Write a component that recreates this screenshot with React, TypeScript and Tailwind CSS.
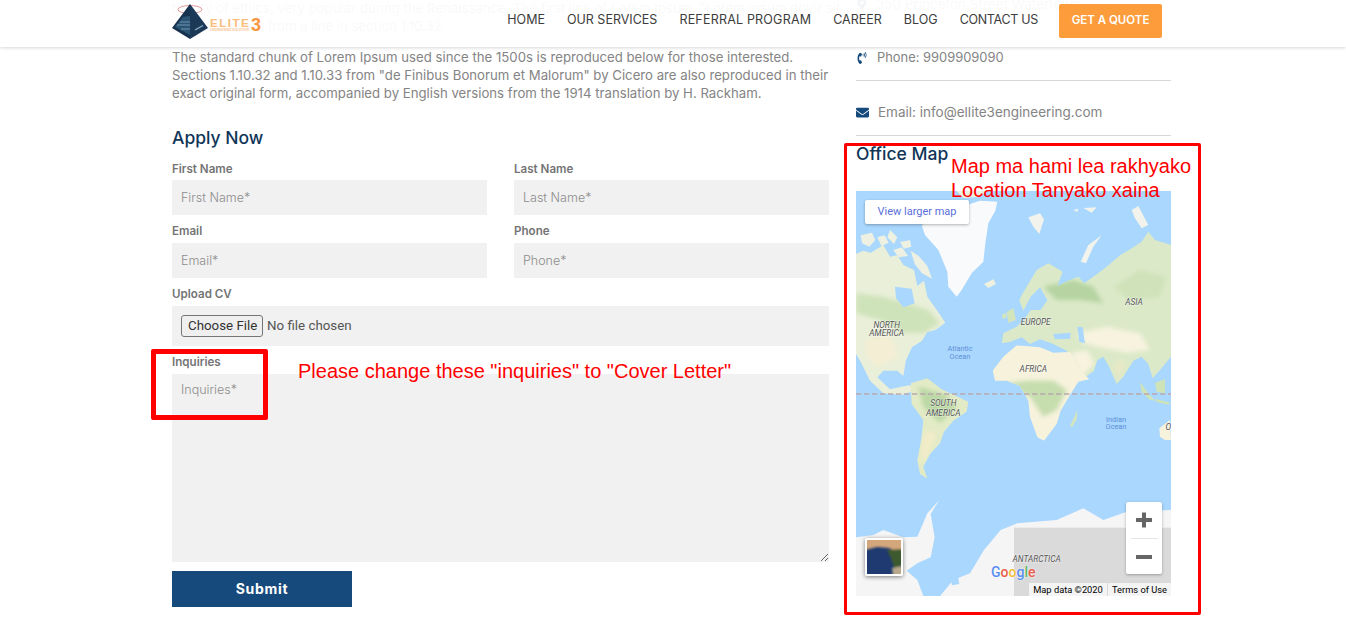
import { FaEnvelope, FaPhoneVolume, FaMapMarkerAlt } from "react-icons/fa";

const inputCls =
  "h-[35px] w-full bg-[#f1f1f1] px-[9px] text-[12.5px] text-[#666] outline-none placeholder:text-[#8d8d8d] placeholder:font-light";
const labelCls = "block h-[12px] text-[11.6px] leading-[12px] font-semibold text-[#747474]";

function Field({ label, ph, gap }: { label: string; ph: string; gap: string }) {
  return (
    <div className={`flex flex-col ${gap}`}>
      <span className={labelCls}>{label}</span>
      <input className={inputCls} placeholder={ph} />
    </div>
  );
}

function Logo() {
  return (
    <div className="mb-[3px] flex items-center">
      <svg width="38" height="38" viewBox="0 0 38 38" className="shrink-0">
        <ellipse cx="18" cy="6.5" rx="12" ry="4" fill="none" stroke="#e08d8d" strokeWidth="0.9" />
        <path d="M18 1 L36 25 L18 36 Z" fill="#1c3a57" />
        <path d="M18 1 L0 25 L18 36 Z" fill="#17324e" />
        <path d="M11 14 L18 13 L18 32 L3 24 Z" fill="#2b5474" />
        <path d="M8 19 H18 M5 22 H18 M9 26 H18" stroke="#8fb0c8" strokeWidth="0.7" />
        <path d="M23 27 L31 22.5" stroke="#8fb0c8" strokeWidth="1.4" />
      </svg>
      <div className="flex h-[38px] items-center">
        <div className="flex w-[41px] flex-col overflow-hidden pt-[6px]">
          <span className="font-['Liberation_Sans',sans-serif] text-[11.5px] leading-[10px] font-bold tracking-[1.5px] text-[#fcbc7b]">
            ELITE
          </span>
          <span className="text-[3.2px] leading-[5px] whitespace-nowrap text-[#f6a75a]">ENGINEERING SOLUTION</span>
        </div>
        <span className="mt-[6px] font-['Liberation_Sans',sans-serif] text-[18px] leading-[18px] font-bold text-[#f7963e]">
          3
        </span>
      </div>
    </div>
  );
}

function MapLand() {
  return (
    <svg viewBox="48 183 945 1215" width="315" height="405" className="block" style={{ fontFamily: "Roboto, sans-serif" }}>
      <defs>
        <filter id="soft" x="-30%" y="-30%" width="160%" height="160%">
          <feGaussianBlur stdDeviation="7" />
        </filter>
        <clipPath id="mapclip">
          <rect x="48" y="183" width="945" height="1215" />
        </clipPath>
        <clipPath id="naclip">
          <path d="M48 372 L70 362 L92 368 L130 345 L150 380 L172 376 L190 405 L222 420 L232 468 L252 452 L262 500 L290 540 L316 578 L286 600 L262 606 L246 632 L216 652 L198 690 L190 738 L172 722 L130 722 L112 742 L150 778 L210 765 L222 782 L185 795 L130 790 L90 752 L62 695 L48 672Z" />
        </clipPath>
        <clipPath id="euclip">
          <path d="M545 495 L560 470 L590 420 L625 400 L668 425 L652 468 L684 452 L715 440 L732 460 L760 440 L800 410 L840 376 L880 352 L905 335 L925 305 L945 330 L993 345 L993 680 L960 720 L938 745 L925 702 L905 680 L880 692 L850 740 L830 762 L808 712 L790 680 L772 690 L762 722 L722 752 L700 702 L680 662 L640 642 L600 628 L570 642 L545 622 L510 636 L485 640 L490 610 L530 590 L552 570 L572 540 L602 540 L622 510 L600 472 L572 500 L550 542 L538 512Z" />
        </clipPath>
        <clipPath id="afclip">
          <path d="M458 722 L490 680 L530 646 L600 652 L640 668 L690 666 L722 722 L748 748 L715 755 L692 792 L662 842 L650 882 L612 932 L592 922 L570 860 L565 812 L540 768 L500 752 L465 752Z" />
        </clipPath>
        <clipPath id="saclip">
          <path d="M212 760 L262 745 L305 778 L385 815 L380 845 L340 872 L312 905 L300 940 L270 972 L250 1010 L262 1046 L240 1032 L232 992 L245 920 L250 870 L215 822Z" />
        </clipPath>
      </defs>
      <rect x="48" y="183" width="945" height="1215" fill="#a9d7fe" />
      <g clipPath="url(#mapclip)">
        {/* Arctic Canada */}
        <g fill="#eef1e2">
          <path d="M62 316 L96 308 L106 330 L88 350 L66 340Z" />
          <path d="M112 322 L134 316 L146 338 L124 348Z" />
          <path d="M150 300 L172 322 L162 342 L142 322Z" />
          <path d="M180 336 L210 330 L214 350 L192 356Z" />
          <path d="M160 360 L186 352 L204 378 L176 382Z" />
          <path d="M212 362 L236 378 L262 408 L276 446 L246 430 L224 402Z" />
          <path d="M350 183 L440 183 L420 200 L370 204Z" />
          <path d="M120 270 L150 262 L140 282Z" />
        </g>
        {/* Greenland */}
        <path d="M245 285 L300 262 L350 235 L420 212 L472 215 L466 242 L445 280 L436 340 L430 395 L395 430 L365 480 L350 500 L325 470 L322 425 L295 360 L255 315Z" fill="#f9fafb" />
        <path d="M432 462 L460 448 L468 462 L445 474Z" fill="#eef1de" />
        {/* Svalbard etc */}
        <g fill="#f1f3ec">
          <path d="M565 262 L600 250 L612 268 L598 312 L580 290Z" />
          <path d="M700 240 L715 236 L712 246Z" />
          <path d="M730 234 L770 232 L755 248Z" />
          <path d="M875 240 L895 228 L925 285 L905 295 L885 265Z" />
          <path d="M722 395 L745 345 L785 316 L760 350 L738 400Z" />
        </g>
        {/* North America */}
        <g clipPath="url(#naclip)">
          <rect x="48" y="330" width="300" height="480" fill="#e9efd9" />
          <path d="M48 490 L130 500 L200 520 L265 540 L300 580 L250 610 L190 610 L120 570 L48 550Z" fill="#cfe3ba" filter="url(#soft)" />
          <path d="M70 630 L150 610 L180 680 L110 715 L80 680Z" fill="#f3eed4" filter="url(#soft)" />
          <path d="M165 470 L215 476 L224 520 L190 532 L168 505Z" fill="#a9d7fe" />
        </g>
        {/* Iceland / UK */}
        <path d="M500 545 L520 535 L528 570 L505 578Z" fill="#d3e5bd" />
        <path d="M488 552 L500 550 L498 566 L486 564Z" fill="#d3e5bd" />
        {/* Eurasia */}
        <g clipPath="url(#euclip)">
          <rect x="480" y="300" width="520" height="470" fill="#dbe9c8" />
          <path d="M610 470 L700 450 L760 470 L790 520 L720 510 L650 510Z" fill="#b6d4a2" filter="url(#soft)" />
          <path d="M820 470 L900 420 L980 440 L960 500 L870 510Z" fill="#cfe2ba" filter="url(#soft)" />
          <path d="M710 610 L800 590 L900 610 L930 660 L860 668 L770 650 L730 640Z" fill="#f7f3de" filter="url(#soft)" />
          <path d="M690 670 L740 660 L765 700 L725 740 L705 700Z" fill="#f7f3de" filter="url(#soft)" />
          <path d="M835 690 L860 700 L835 750 L820 710Z" fill="#e9e8c6" filter="url(#soft)" />
          <path d="M640 612 L692 608 L690 626 L645 628Z" fill="#a9d7fe" />
          <path d="M712 590 L728 592 L735 640 L718 636Z" fill="#a9d7fe" />
        </g>
        {/* Africa */}
        <g clipPath="url(#afclip)">
          <rect x="450" y="640" width="310" height="300" fill="#f6f2dc" />
          <path d="M490 762 L560 752 L640 752 L680 780 L650 840 L610 860 L570 800Z" fill="#c6ddae" filter="url(#soft)" />
        </g>
        <path d="M690 888 L712 840 L710 868 L696 892Z" fill="#d3e5bd" />
        {/* South America */}
        <g clipPath="url(#saclip)">
          <rect x="200" y="740" width="200" height="320" fill="#e2ebc6" />
          <path d="M235 770 L320 795 L350 830 L300 880 L250 830Z" fill="#bcd8a4" filter="url(#soft)" />
          <path d="M250 905 L292 905 L262 985 L240 1000Z" fill="#f2ecc8" filter="url(#soft)" />
        </g>
        {/* Indonesia, Australia */}
        <g fill="#cfe3b8">
          <path d="M900 755 L925 790 L945 812 L930 810 L905 785Z" />
          <path d="M945 806 L990 818 L985 824 L950 816Z" />
          <path d="M945 758 L975 748 L975 790 L950 785Z" />
        </g>
        <path d="M958 895 L990 870 L993 930 L975 930 L960 920Z" fill="#f6f2dc" />
        {/* Antarctica */}
        <path d="M48 1222 L100 1215 L130 1200 L190 1222 L232 1220 L262 1150 L298 1110 L272 1152 L284 1222 L272 1282 L232 1300 L200 1322 L232 1350 L250 1398 L48 1398Z" fill="#f4f5f4" />
        <path d="M300 1398 L340 1350 L390 1330 L432 1260 L482 1200 L532 1180 L650 1170 L730 1135 L790 1170 L860 1145 L993 1140 L993 1398Z" fill="#f5f5f5" />
        <rect x="522" y="1193" width="471" height="205" fill="#dadada" />
        <path d="M358 1362 L345 1290 L326 1320 L336 1366Z" fill="#a9d7fe" />
        {/* Equator */}
        <line x1="48" y1="792" x2="993" y2="792" stroke="#b9a9ae" strokeWidth="4" strokeDasharray="16 8" />
        {/* labels */}
        <g fill="#555" fontSize="25" fontStyle="italic" textAnchor="middle" stroke="#ffffff" strokeOpacity="0.55" strokeWidth="3" paintOrder="stroke">
          <text x="140" y="593">NORTH</text>
          <text x="140" y="619">AMERICA</text>
          <text x="587" y="584">EUROPE</text>
          <text x="882" y="524">ASIA</text>
          <text x="580" y="727">AFRICA</text>
          <text x="310" y="829">SOUTH</text>
          <text x="310" y="857">AMERICA</text>
          <text x="590" y="1295">ANTARCTICA</text>
          <text x="985" y="900">O</text>
        </g>
        <g fill="#5e8fd8" fontSize="22" textAnchor="middle">
          <text x="360" y="664">Atlantic</text>
          <text x="360" y="686">Ocean</text>
          <text x="828" y="875">Indian</text>
          <text x="828" y="897">Ocean</text>
        </g>
      </g>
    </svg>
  );
}

function OfficeMap() {
  return (
    <div className="relative h-[405px] w-[315px] overflow-hidden font-['Roboto',sans-serif]">
      <MapLand />
      <div className="absolute top-[9px] left-[9px] flex h-[24px] w-[104px] items-center justify-center rounded-[2px] bg-white text-[11px] text-[#5b6fdc] shadow-[0_1px_3px_rgba(0,0,0,0.3)]">
        View larger map
      </div>
      <div className="absolute top-[311px] left-[270px] flex h-[72px] w-[36px] flex-col items-center rounded-[2px] bg-white shadow-[0_1px_3px_rgba(0,0,0,0.3)]">
        <div className="flex h-[36px] items-center justify-center">
          <svg width="18" height="18" viewBox="0 0 18 18">
            <path d="M9 1.5V16.5M1 9H17" stroke="#666" strokeWidth="4" />
          </svg>
        </div>
        <div className="h-px w-[27px] bg-[#e6e6e6]" />
        <div className="flex h-[35px] items-center justify-center">
          <svg width="18" height="18" viewBox="0 0 18 18">
            <path d="M1 9H17" stroke="#666" strokeWidth="4" />
          </svg>
        </div>
      </div>
      <div className="absolute top-[347px] left-[9px] h-[38px] w-[38px] rounded-[2px] border-2 border-white shadow-[0_1px_4px_rgba(0,0,0,0.5)]">
        <svg width="34" height="34" viewBox="0 0 34 34" className="block">
          <defs>
            <filter id="thumb">
              <feGaussianBlur stdDeviation="1.2" />
            </filter>
          </defs>
          <rect width="34" height="34" fill="#1f3a70" />
          <g filter="url(#thumb)">
            <path d="M-2 -2H36V22L30 12 22 8 10 7 -2 10Z" fill="#d3a67c" />
            <path d="M20 10 L36 9 L36 24 L28 30 L24 18Z" fill="#3d5a2f" />
            <path d="M25 28 L36 26 V36 H26Z" fill="#b9a98a" />
          </g>
        </svg>
      </div>
      <div className="absolute top-[372px] left-[135px] text-[14px] leading-[18px] font-medium [text-shadow:0_0_2px_#fff]">
        <span className="text-[#5a8ff0]">G</span>
        <span className="text-[#e8604c]">o</span>
        <span className="text-[#f5bd3a]">o</span>
        <span className="text-[#5a8ff0]">g</span>
        <span className="text-[#5cb765]">l</span>
        <span className="text-[#e8604c]">e</span>
      </div>
      <div className="absolute right-0 bottom-0 flex h-[13px] text-[9.3px] leading-[13px] text-black">
        <span className="w-[78px] bg-white/70 text-center">Map data ©2020</span>
        <span className="ml-px w-[63px] bg-white/70 text-center">Terms of Use</span>
      </div>
    </div>
  );
}

export default function App() {
  return (
    <div className="relative h-[626px] w-[1346px] overflow-hidden bg-white font-['Inter',sans-serif]">
      <header className="absolute top-0 left-0 z-10 flex h-[47px] w-full items-center bg-white/95 pr-[184px] pl-[172px] shadow-[0_1px_3px_rgba(0,0,0,0.16)]">
        <Logo />
        <nav className="mb-[7px] ml-auto flex items-center gap-[22px] text-[12.5px] text-[#3c3c3c]">
          <span>HOME</span>
          <span>OUR SERVICES</span>
          <span className="tracking-[0.2px]">REFERRAL PROGRAM</span>
          <span>CAREER</span>
          <span>BLOG</span>
          <span className="tracking-[-0.3px]">CONTACT US</span>
          <span className="mt-[2px] ml-[-1px] flex h-[34px] w-[103px] items-center justify-center rounded-[2px] bg-[#fd9c3b] text-[11.5px] font-semibold text-white">
            GET A QUOTE
          </span>
        </nav>
      </header>

      <main className="flex gap-[27px] pl-[172px]">
        <section className="-mt-px w-[657px]">
          <p className="mb-[13px] text-[13.2px] leading-[18px] whitespace-nowrap text-[#848484]">
            theory of ethics, very popular during the Renaissance. The first line of Lorem Ipsum, "Lorem ipsum dolor sit
            <br />
            amet..", comes from a line in section 1.10.32.
          </p>
          <p className="text-[13.2px] leading-[18px] whitespace-nowrap text-[#848484]">
            The standard chunk of Lorem Ipsum used since the 1500s is reproduced below for those interested.
            <br />
            Sections 1.10.32 and 1.10.33 from "de Finibus Bonorum et Malorum" by Cicero are also reproduced in their
            <br />
            exact original form, accompanied by English versions from the 1914 translation by H. Rackham.
          </p>
          <h2 className="mt-[25px] h-[22px] text-[17.5px] leading-[22px] font-medium text-[#0f3557]">Apply Now</h2>
          <div className="mt-[14px] grid grid-cols-[315px_315px] gap-x-[27px] gap-y-[10px]">
            <Field label="First Name" ph="First Name*" gap="gap-[5px]" />
            <Field label="Last Name" ph="Last Name*" gap="gap-[5px]" />
            <Field label="Email" ph="Email*" gap="gap-[6px]" />
            <Field label="Phone" ph="Phone*" gap="gap-[6px]" />
          </div>
          <div className="mt-[10px] flex flex-col gap-[6px]">
            <span className={labelCls}>Upload CV</span>
            <div className="flex h-[40px] items-center bg-[#f1f1f1] px-[9px]">
              <input
                type="file"
                className="w-[300px] font-['Roboto',sans-serif] text-[13.33px] text-[#555] file:mr-[4px] file:h-[22px] file:w-[82px] file:rounded-[3px] file:border file:border-[#767676] file:bg-[#efefef] file:px-[6px] file:text-[13.33px] file:text-[#333]"
              />
            </div>
          </div>
          <div className="mt-[10px] flex flex-col gap-[6px]">
            <span className={labelCls}>Inquiries</span>
            <textarea
              className="block h-[188px] w-full bg-[#f1f1f1] px-[9px] py-[7px] text-[12.5px] outline-none placeholder:font-light placeholder:text-[#8d8d8d]"
              placeholder="Inquiries*"
            />
          </div>
          <button className="mt-[9px] flex h-[36px] w-[180px] items-center justify-center bg-[#174a7c] pb-[2px] text-[14px] font-bold tracking-[0.7px] text-white">
            Submit
          </button>
        </section>

        <aside className="-mt-[25px] w-[315px] text-[13.5px] text-[#848484]">
          <div className="flex h-[51px] items-center gap-[8px] border-b border-[#d8d8d8] pt-[8px]">
            <FaMapMarkerAlt className="text-[12px] text-[#174a7c]" />
            <span>350 Princeton Street Watertown</span>
          </div>
          <div className="flex h-[55px] items-center gap-[9px] border-b border-[#d8d8d8] pt-[9px]">
            <FaPhoneVolume className="text-[12px] text-[#174a7c]" />
            <span className="text-[12.9px]">Phone: 9909909090</span>
          </div>
          <div className="flex h-[55px] items-center gap-[9px] border-b border-[#d8d8d8] pt-[8px]">
            <FaEnvelope className="text-[13px] text-[#174a7c]" />
            <span>Email: info@ellite3engineering.com</span>
          </div>
          <h3 className="mt-[7px] h-[22px] text-[17.5px] leading-[22px] font-medium text-[#0f3557]">Office Map</h3>
          <div className="mt-[26px]">
            <OfficeMap />
          </div>
        </aside>
      </main>

      {/* review annotations */}
      <div className="absolute top-[349px] left-[151px] h-[71px] w-[117px] rounded-[2px] border-[5px] border-[#fe0000]" />
      <div className="absolute top-[143px] left-[844px] h-[472px] w-[357px] rounded-[2px] border-[3px] border-[#fe0000]" />
      <div className="absolute top-[359px] left-[298px] font-['Liberation_Sans',sans-serif] text-[20px] leading-[24px] whitespace-nowrap text-[#fe0000]">
        Please change these "inquiries" to "Cover Letter"
      </div>
      <div className="absolute top-[154px] left-[951px] font-['Liberation_Sans',sans-serif] text-[20px] leading-[24px] whitespace-nowrap text-[#fe0000]">
        Map ma hami lea rakhyako
        <br />
        Location Tanyako xaina
      </div>
    </div>
  );
}
